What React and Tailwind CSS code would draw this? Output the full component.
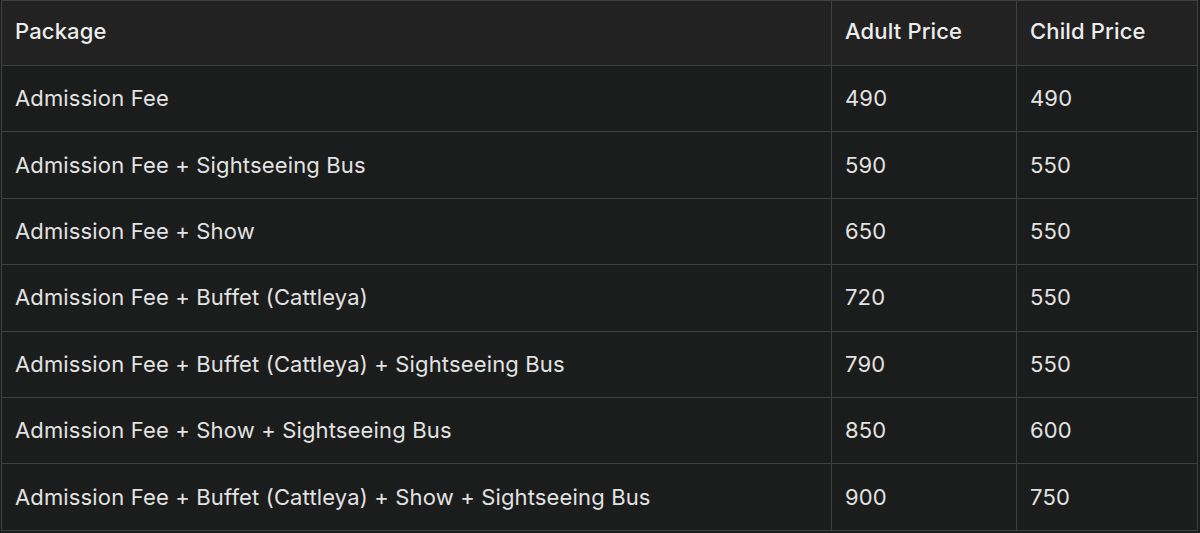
const rows = [
  ["Admission Fee", "490", "490"],
  ["Admission Fee + Sightseeing Bus", "590", "550"],
  ["Admission Fee + Show", "650", "550"],
  ["Admission Fee + Buffet (Cattleya)", "720", "550"],
  ["Admission Fee + Buffet (Cattleya) + Sightseeing Bus", "790", "550"],
  ["Admission Fee + Show + Sightseeing Bus", "850", "600"],
  ["Admission Fee + Buffet (Cattleya) + Show + Sightseeing Bus", "900", "750"],
];

export default function App() {
  return (
    <div
      className="min-h-screen w-full bg-[#1b1c1c] pl-px pr-[2px]"
      style={{ fontFamily: "Inter, 'Liberation Sans', sans-serif" }}
    >
      <table className="w-full border-collapse text-[22px] tracking-[0.15px] text-[#e2e2e2]">
        <thead>
          <tr className="bg-[#222222] h-[65px]">
            <th className="border border-[#404040] px-[13px] pb-[4px] text-left font-medium text-[#ededed] w-[830px]">
              Package
            </th>
            <th className="border border-[#404040] px-[13px] pb-[4px] text-left font-medium text-[#ededed] w-[185px]">
              Adult Price
            </th>
            <th className="border border-[#404040] px-[13px] pb-[4px] text-left font-medium text-[#ededed]">
              Child Price
            </th>
          </tr>
        </thead>
        <tbody>
          {rows.map((r) => (
            <tr key={r[0]} className="h-[66.4px]">
              {r.map((c, i) => (
                <td key={i} className="border border-[#404040] px-[13px] font-normal">
                  {c}
                </td>
              ))}
            </tr>
          ))}
        </tbody>
      </table>
    </div>
  );
}
